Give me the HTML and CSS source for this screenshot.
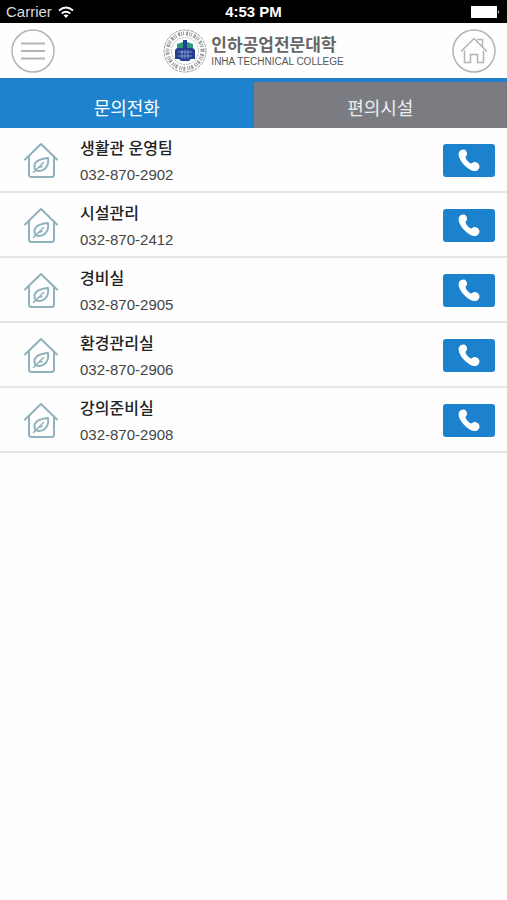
FILE: index.html
```html
<!DOCTYPE html>
<html lang="ko">
<head>
<meta charset="utf-8">
<meta name="viewport" content="width=device-width, initial-scale=1">
<title>인하공업전문대학</title>
<link rel="stylesheet" href="styles.css">
</head>
<body>
<svg class="defs" aria-hidden="true">
  <symbol id="leaf-house" viewBox="0 0 36 38">
    <g fill="none" stroke="#8fb2bc" stroke-width="2" stroke-linecap="round" stroke-linejoin="round">
      <path d="M2 17.500 18 2 34 17.500"/>
      <path d="M6 14.500V32.500Q6 35 8.500 35H28.500Q31 35 31 32.500V14.500"/>
      <path d="M12.500 28C9 21 14.500 17 25 16C26.500 24.500 20 31.500 12.500 28Z"/>
      <path d="M10.500 30.500 20.500 20.500M15.500 25.500 19 24.500" stroke-width="1.500"/>
    </g>
  </symbol>
  <symbol id="phone" viewBox="0 0 22 23">
    <path fill="#fff" d="M1.500 2.500C3 .5 6.500-.2 8 1.800C9.600 4 9.400 6.300 7.500 7.700C7.800 10.500 10.800 13.800 13.600 14.600C15 12.700 17.500 12.400 19.600 14C22 15.800 22 18.600 20.300 20.500C18.500 22.400 15.500 22.600 12.500 21C6.500 17.500 2 12 .8 7C.4 5.400 .5 3.800 1.500 2.500Z"/>
  </symbol>
</svg>

<div class="status">
  <div class="carrier">
    <span>Carrier</span>
    <svg width="16" height="12" viewBox="0 0 16 12" aria-hidden="true">
      <g fill="none" stroke="#fff" stroke-width="2"><path d="M1 4.500Q8-1.500 15 4.500"/><path d="M3.800 7.500Q8 4 12.200 7.500"/></g>
      <path fill="#fff" d="M5.500 9.300Q8 7.500 10.500 9.300L8 12Z"/>
    </svg>
  </div>
  <strong class="clock">4:53 PM</strong>
  <div class="battery">
    <svg width="30" height="12" viewBox="0 0 30 12" aria-hidden="true"><path fill="#fff" d="M0 0H26V12H0Z"/><path fill="#bbb" d="M27 4Q29.500 6 27 8Z"/></svg>
  </div>
</div>

<header class="header">
  <button class="round" type="button" aria-label="메뉴">
    <svg width="44" height="44" viewBox="0 0 44 44" fill="none" stroke="#b3b3b3"><circle cx="22" cy="22" r="21" stroke-width="1.500"/><path d="M10 14.500H34M10 22H34M10 29.500H34" stroke-width="2"/></svg>
  </button>
  <div class="brand">
    <svg class="seal" width="44" height="44" viewBox="0 0 44 44" aria-hidden="true">
      <circle cx="22" cy="22" r="21" fill="none" stroke="#999" stroke-dasharray="3 1"/>
      <circle cx="22" cy="22" r="17.500" fill="none" stroke="#999" stroke-width="4" stroke-dasharray="1 2 2 1 1 1"/>
      <circle cx="22" cy="22" r="13.500" fill="none" stroke="#bbb" stroke-dasharray="2 1"/>
      <path fill="#2b9a7d" d="M14 15 20 13V21H14ZM24 13 30 15V21H24Z"/>
      <path fill="#243f91" d="M20 11H24V19H30L32 21V30H28L26 32H18L16 30H12V21L14 19H20Z"/>
      <path stroke="#b7cbed" d="M15 23H29M15 27H29M19 21V30M22 21V30M25 21V30" stroke-width=".6"/>
    </svg>
    <div class="wordmark"><strong class="ko">인하공업전문대학</strong><span class="en">INHA TECHNICAL COLLEGE</span></div>
  </div>
  <button class="round" type="button" aria-label="홈">
    <svg width="44" height="44" viewBox="0 0 44 44" fill="none" stroke="#b3b3b3"><circle cx="22" cy="22" r="21" stroke-width="1.500"/><path stroke-width="1.500" d="M9 22.500 22 9.500 35 22.500M25 10.500H30.500V17M12.500 21.500V33.500H18.500V25.500H25.500V33.500H31.500V21.500"/></svg>
  </button>
</header>

<nav class="tabs">
  <a class="tab active" href="#phones" aria-current="page">문의전화</a>
  <a class="tab" href="#facilities">편의시설</a>
</nav>

<main id="phones">
  <ul class="list">
    <li class="row"><svg class="house" aria-hidden="true"><use href="#leaf-house"/></svg><div class="info"><span class="name">생활관 운영팀</span><span class="number">032-870-2902</span></div><a class="call" href="tel:032-870-2902" aria-label="생활관 운영팀 전화"><svg class="phone"><use href="#phone"/></svg></a></li>
    <li class="row"><svg class="house" aria-hidden="true"><use href="#leaf-house"/></svg><div class="info"><span class="name">시설관리</span><span class="number">032-870-2412</span></div><a class="call" href="tel:032-870-2412" aria-label="시설관리 전화"><svg class="phone"><use href="#phone"/></svg></a></li>
    <li class="row"><svg class="house" aria-hidden="true"><use href="#leaf-house"/></svg><div class="info"><span class="name">경비실</span><span class="number">032-870-2905</span></div><a class="call" href="tel:032-870-2905" aria-label="경비실 전화"><svg class="phone"><use href="#phone"/></svg></a></li>
    <li class="row"><svg class="house" aria-hidden="true"><use href="#leaf-house"/></svg><div class="info"><span class="name">환경관리실</span><span class="number">032-870-2906</span></div><a class="call" href="tel:032-870-2906" aria-label="환경관리실 전화"><svg class="phone"><use href="#phone"/></svg></a></li>
    <li class="row"><svg class="house" aria-hidden="true"><use href="#leaf-house"/></svg><div class="info"><span class="name">강의준비실</span><span class="number">032-870-2908</span></div><a class="call" href="tel:032-870-2908" aria-label="강의준비실 전화"><svg class="phone"><use href="#phone"/></svg></a></li>
  </ul>
</main>
</body>
</html>
```

FILE: styles.css
```css
* { box-sizing: border-box; }
body {
  margin: 0;
  background: #fefefe;
  color: #222;
  font-family: "Liberation Sans", "Noto Sans CJK KR", sans-serif;
}
svg { display: block; }
.defs { display: none; }

.status {
  display: grid;
  grid-template-columns: 1fr auto 1fr;
  align-items: center;
  height: 23px;
  padding: 0 6px;
  background: #000;
  color: #fff;
  font-size: 15px;
  line-height: 23px;
}
.carrier { display: flex; align-items: center; gap: 6px; color: #ddd; }
.clock { font-size: 15px; }
.battery { justify-self: end; }

.header {
  display: flex;
  align-items: center;
  justify-content: space-between;
  height: 59px;
  padding: 0 11px;
  border-bottom: 4px solid #1f80cb;
}
.round { padding: 0; border: 0; background: none; }
.brand { display: flex; align-items: center; gap: 4px; }
.wordmark { display: flex; flex-direction: column; padding-top: 3px; }
.ko { color: #666; font-size: 17px; line-height: 20px; }
.en { color: #555; font-size: 10px; line-height: 12px; }

.tabs { display: grid; grid-template-columns: 1fr 1fr; }
.tab {
  height: 46px;
  padding-top: 4px;
  background: #7b7c82;
  color: #eee;
  font-size: 18px;
  line-height: 46px;
  text-align: center;
  text-decoration: none;
}
.active { background: #1e83ce; color: #fff; }

.list { margin: 0; padding: 0; list-style: none; }
.row {
  display: flex;
  align-items: center;
  height: 65px;
  padding: 2px 12px 0 23px;
  border-bottom: 2px solid #e6e6e6;
}
.house { width: 36px; height: 38px; }
.info {
  display: flex;
  flex: 1;
  flex-direction: column;
  gap: 4px;
  margin-left: 21px;
}
.name { font-size: 16px; font-weight: 500; line-height: 24px; }
.number { color: #444; font-size: 15px; line-height: 20px; }
.call {
  display: flex;
  justify-content: center;
  width: 52px;
  height: 33px;
  padding-top: 5px;
  border-radius: 3px;
  background: #1d82cd;
}
.phone { width: 22px; height: 23px; }
```
